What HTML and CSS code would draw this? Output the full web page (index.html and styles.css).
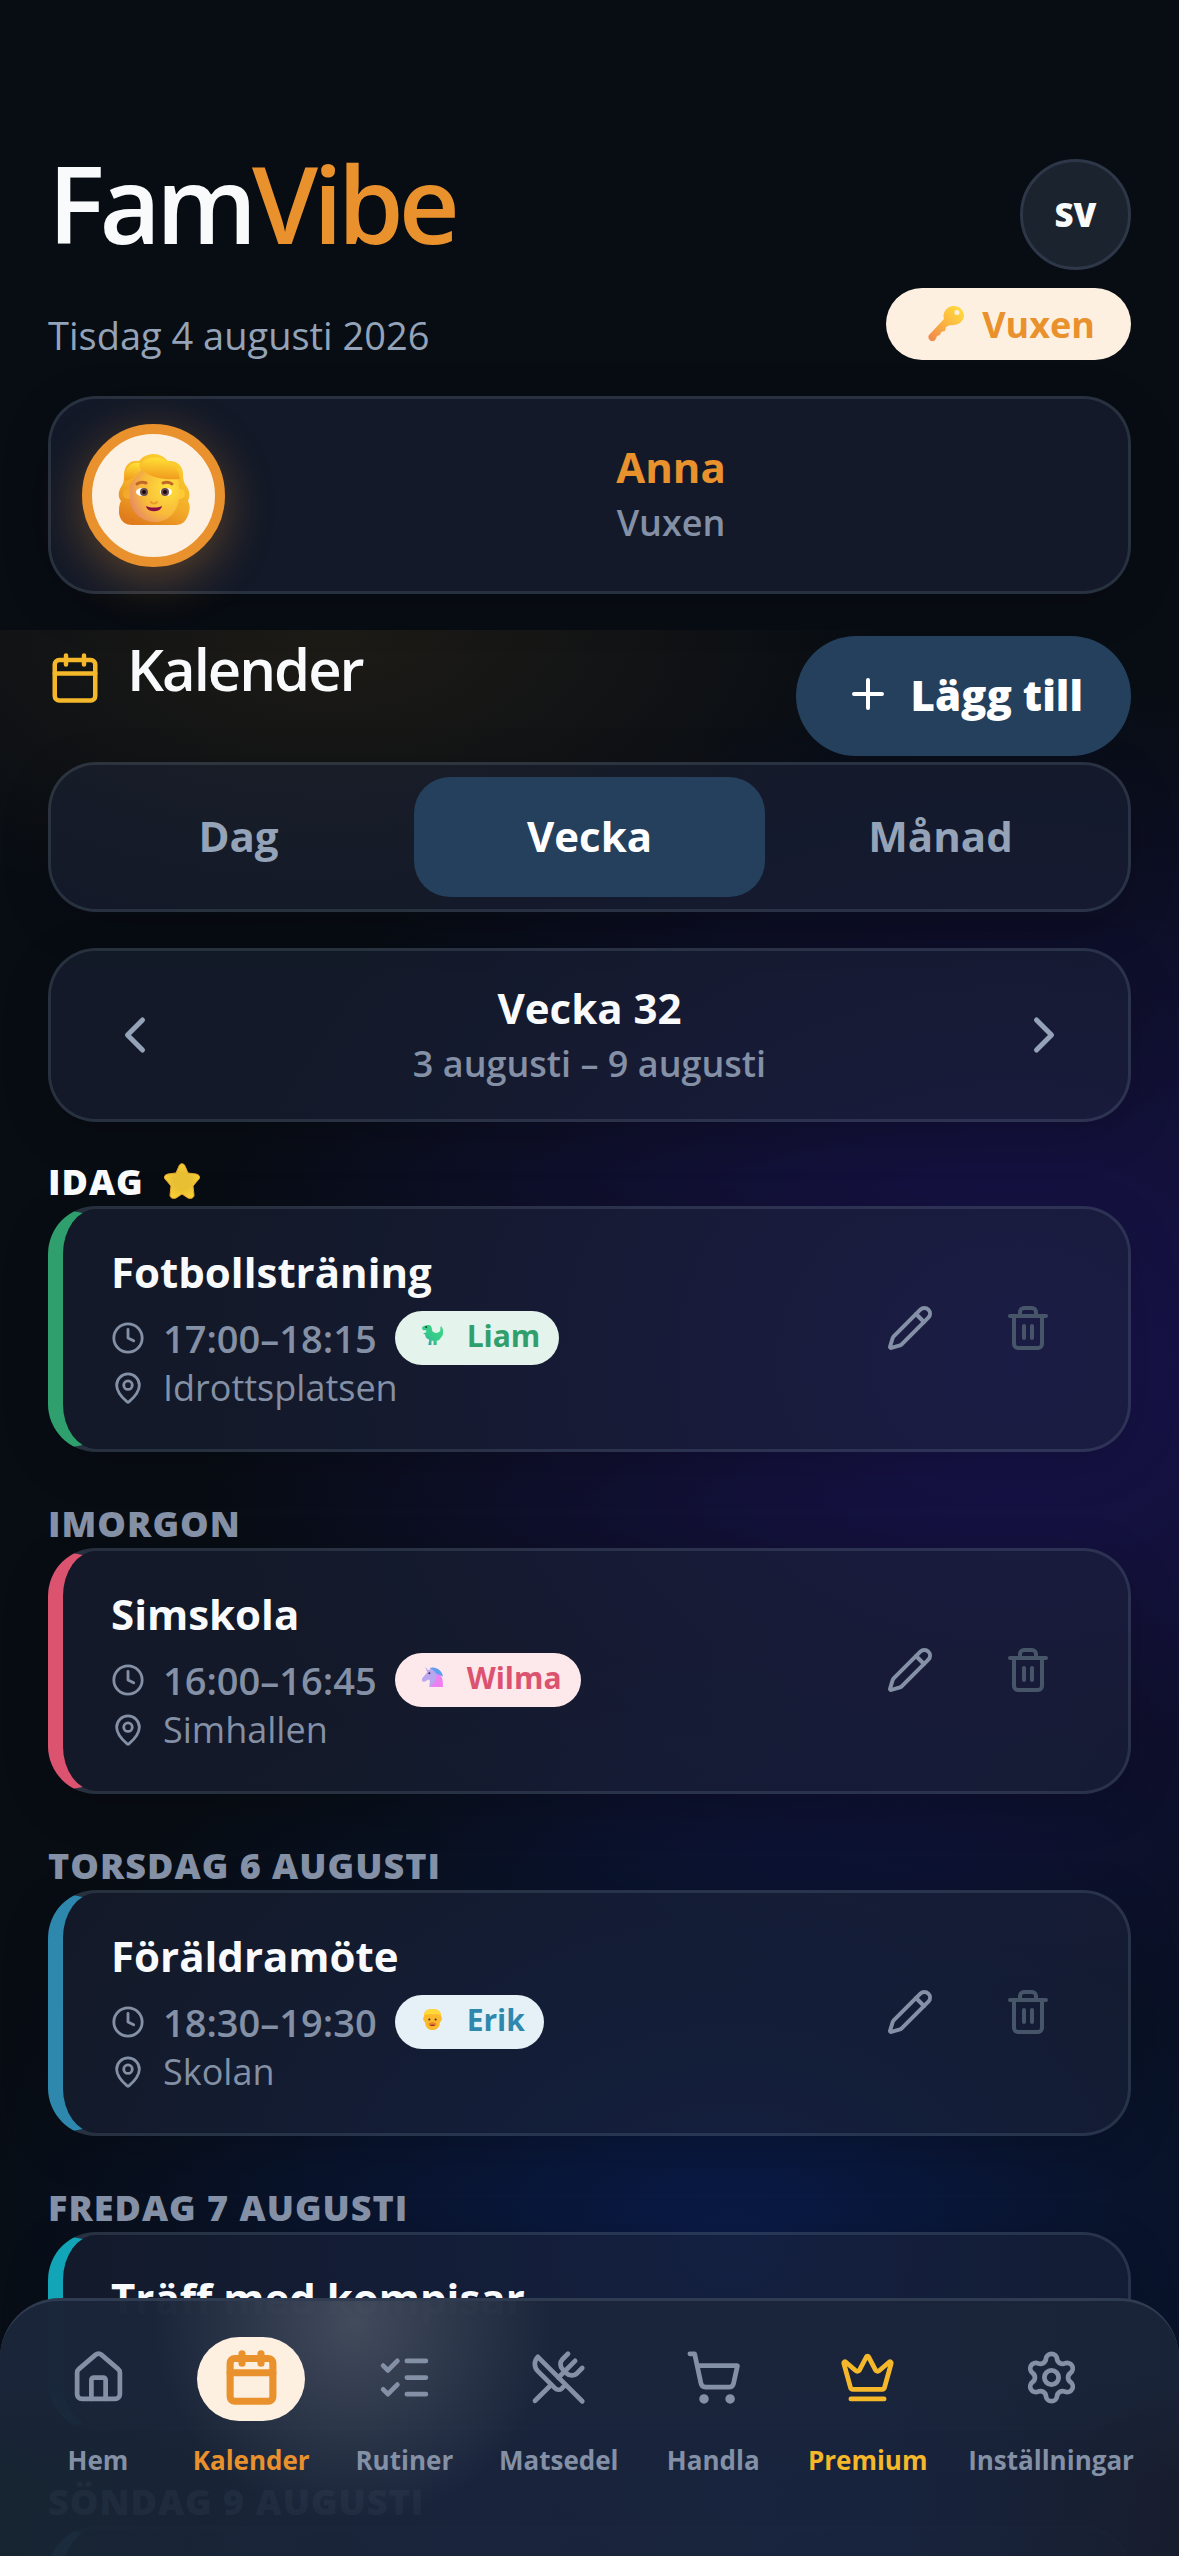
FILE: index.html
```html
<!DOCTYPE html>
<html lang="sv">
<head>
    <meta charset="UTF-8">
    <meta name="viewport" content="width=device-width, initial-scale=1.0">
    <title>FamVibe – Kalender</title>
    <link rel="stylesheet" href="styles.css">
</head>
<body>
<!-- Ikoner som används på flera ställen -->
<svg class="sprite" aria-hidden="true">
    <symbol id="i-calendar" viewBox="0 0 24 24"><path d="M8 2v4M16 2v4M3 10h18"/><rect x="3" y="4" width="18" height="18" rx="2"/></symbol>
    <symbol id="i-clock" viewBox="0 0 24 24"><circle cx="12" cy="12" r="10"/><path d="M12 6v6l4 2"/></symbol>
    <symbol id="i-pin" viewBox="0 0 24 24"><path d="M20 10c0 4.993-5.539 10.193-7.399 11.799a1 1 0 0 1-1.202 0C9.539 20.193 4 14.993 4 10a8 8 0 0 1 16 0"/><circle cx="12" cy="10" r="3"/></symbol>
    <symbol id="i-pencil" viewBox="0 0 24 24"><path d="M21.174 6.812a1 1 0 0 0-3.986-3.987L3.842 16.174a2 2 0 0 0-.5.83l-1.321 4.352a.5.5 0 0 0 .623.622l4.353-1.32a2 2 0 0 0 .83-.497z"/><path d="m15 5 4 4"/></symbol>
    <symbol id="i-trash" viewBox="0 0 24 24"><path d="M3 6h18M19 6v14a2 2 0 0 1-2 2H7a2 2 0 0 1-2-2V6M8 6V4a2 2 0 0 1 2-2h4a2 2 0 0 1 2 2v2M10 11v6M14 11v6"/></symbol>
</svg>

<div class="app">
    <header class="header">
        <div class="brand">
            <h1 class="logo">Fam<span class="logo-accent">Vibe</span></h1>
            <p class="date">Tisdag 4 augusti 2026</p>
        </div>
        <div class="header-right">
            <button class="lang-button">SV</button>
            <span class="role-pill">
                <svg class="key" viewBox="0 0 36 36">
                    <defs><linearGradient id="g-key" x1="1" y1="0" x2="0" y2="1"><stop offset="0.1" stop-color="#ffd93e"/><stop offset="0.5" stop-color="#fbb541"/><stop offset="1" stop-color="#f0844e"/></linearGradient></defs>
                    <path fill="url(#g-key)" fill-rule="evenodd" d="M26 0a10 10 0 0 0-10 13L1 29c-2 3 1 7 4 6 2 0 3-2 4-5l3-1 1-3 4-1 1-4 4-2c6 1 13-2 14-9C36 4 31 0 26 0Zm3 4a2 2 0 1 1 0 5 2 2 0 0 1 0-5Z"/>
                </svg>
                Vuxen
            </span>
        </div>
    </header>

    <section class="profile">
        <div class="avatar">
            <svg viewBox="0 0 72 72">
                <defs>
                    <linearGradient id="g-hair" x1="0.8" y1="0" x2="0.3" y2="1"><stop offset="0" stop-color="#fdd22f"/><stop offset="0.6" stop-color="#f3ab28"/><stop offset="1" stop-color="#e07c1c"/></linearGradient>
                    <radialGradient id="g-face" cx="0.75" cy="0.35" r="0.85"><stop offset="0" stop-color="#ffe23c"/><stop offset="0.6" stop-color="#f8b93a"/><stop offset="1" stop-color="#e5846a"/></radialGradient>
                    <linearGradient id="g-fringe" x1="0.6" y1="0" x2="0.5" y2="1"><stop offset="0" stop-color="#ffe135"/><stop offset="1" stop-color="#f1981e"/></linearGradient>
                </defs>
                <path fill="url(#g-hair)" d="M36 1c6 0 10 3 14 7 9-1 15 5 15 13 0 6 1 9 4 13 3 5 3 9 1 14 2 4 2 7 1 11-2 9-7 13-13 13H14C7 72 2 68 1 60c0-5 0-8 2-12-3-4-3-9 0-14 3-4 3-8 3-13C7 11 13 7 21 8c4-5 9-7 15-7Z"/>
                <circle cx="10" cy="41" r="5" fill="#f3a92c"/><circle cx="62" cy="41" r="5" fill="#fbca36"/>
                <path fill="url(#g-face)" d="M12 32c3-5 7-10 12-15 10 8 21 9 36 9 1 5 2 12 1 19-1 14-11 24-24 24S12 59 12 45V32Z"/>
                <path fill="url(#g-fringe)" d="M7 28C5 16 13 8 22 10c-1 3 0 5 1 7-4 5-9 9-16 11Z"/>
                <path fill="url(#g-fringe)" d="M22 14c2-9 15-12 25-7 8 4 14 9 15 19-14 1-31 0-40-12Z"/>
                <path fill="none" stroke="#c26728" stroke-width="3" stroke-linecap="round" d="M19 31c3-2 6-2 9-1M45 30c3-1 6-1 9 1"/>
                <ellipse cx="24" cy="39" rx="6" ry="4" fill="#fff"/><ellipse cx="48" cy="39" rx="6" ry="4" fill="#fff"/>
                <circle cx="26" cy="39" r="4" fill="#6b4a4a"/><circle cx="47" cy="39" r="4" fill="#6b4a4a"/>
                <circle cx="26" cy="39" r="2" fill="#140b12"/><circle cx="47" cy="39" r="2" fill="#140b12"/>
                <path fill="none" stroke="#e99a2a" stroke-width="2" stroke-linecap="round" d="M33 49c1 2 5 2 6 0"/>
                <path fill="#8a0f45" d="M28 53c5 2 11 2 16 0-1 7-15 7-16 0Z"/>
            </svg>
        </div>
        <div class="profile-text">
            <div class="profile-name">Anna</div>
            <div class="profile-role">Vuxen</div>
        </div>
    </section>

    <main class="main">
        <div class="page-head">
            <svg class="icon page-icon"><use href="#i-calendar"/></svg>
            <h2 class="page-title">Kalender</h2>
            <button class="add-button">
                <svg class="icon add-icon" viewBox="0 0 24 24"><path d="M5 12h14M12 5v14"/></svg>
                Lägg till
            </button>
        </div>

        <div class="tabs">
            <button class="tab">Dag</button>
            <button class="tab active">Vecka</button>
            <button class="tab">Månad</button>
        </div>

        <div class="week-nav">
            <button class="arrow" aria-label="Föregående vecka"><svg class="icon" viewBox="0 0 24 24"><path d="m15 18-6-6 6-6"/></svg></button>
            <div class="week-text">
                <div class="week-title">Vecka 32</div>
                <div class="week-range">3 augusti – 9 augusti</div>
            </div>
            <button class="arrow" aria-label="Nästa vecka"><svg class="icon" viewBox="0 0 24 24"><path d="m9 18 6-6-6-6"/></svg></button>
        </div>

        <section class="day">
            <h3 class="day-title today">IDAG
                <svg class="star" viewBox="0 0 36 36">
                    <defs><radialGradient id="g-star"><stop offset="0.5" stop-color="#e8bf33"/><stop offset="1" stop-color="#f9cf35"/></radialGradient></defs>
                    <path fill="url(#g-star)" stroke="#e5a52c" d="M15 3c1-3 5-3 6 0l3 7 8 1c4 1 5 4 2 6l-5 6 1 9c0 3-3 4-6 3l-6-4-6 4c-3 1-6 0-6-3l1-9-5-6c-3-2-2-5 2-6l8-1 3-7Z"/>
                </svg>
            </h3>
            <article class="event green">
                <div class="event-body">
                    <h4 class="event-title">Fotbollsträning</h4>
                    <div class="event-row">
                        <svg class="icon small"><use href="#i-clock"/></svg>
                        <span class="event-time">17:00–18:15</span>
                        <span class="person">
                            <svg class="emoji" viewBox="0 0 20 20">
                                <defs><linearGradient id="g-dino" x1="1" y1="0" x2="0" y2="1"><stop offset="0" stop-color="#3ddc84"/><stop offset="0.6" stop-color="#35c88b"/><stop offset="1" stop-color="#4a78b0"/></linearGradient></defs>
                                <path fill="url(#g-dino)" d="M0 3c0-2 4-3 7-3 3 1 2 4 3 6 2 2 5 2 7 0 1-2 0-3 1-5 3 3 3 8 0 11-1 2-2 3-4 3v4h-3v-4H9v4H6l1-5c-3-1-4-3-4-5L1 8l3-1V5L1 5Z"/>
                                <circle cx="4" cy="2" r="1" fill="#174b35"/>
                            </svg>
                            Liam
                        </span>
                    </div>
                    <div class="event-row">
                        <svg class="icon small"><use href="#i-pin"/></svg>
                        <span class="event-place">Idrottsplatsen</span>
                    </div>
                </div>
                <div class="event-actions">
                    <button class="action" aria-label="Redigera"><svg class="icon"><use href="#i-pencil"/></svg></button>
                    <button class="action delete" aria-label="Ta bort"><svg class="icon"><use href="#i-trash"/></svg></button>
                </div>
            </article>
        </section>

        <section class="day">
            <h3 class="day-title">IMORGON</h3>
            <article class="event red">
                <div class="event-body">
                    <h4 class="event-title">Simskola</h4>
                    <div class="event-row">
                        <svg class="icon small"><use href="#i-clock"/></svg>
                        <span class="event-time">16:00–16:45</span>
                        <span class="person">
                            <svg class="emoji" viewBox="0 0 20 20">
                                <path fill="#b9a6ee" d="M3 0l3 3 4-2 4 5c3 4 2 8 1 13H7c0-3 1-5 0-7-2 0-3 2-5 2s-3-2-2-3l5-6Z"/>
                                <path fill="#5f9df0" d="M7 1c6-2 12 2 13 8l-6-2-3-4Z"/>
                                <path fill="#ee7ff0" d="M14 7c5 0 6 4 6 12H8c3-3 6-6 6-12Z"/>
                                <circle cx="7" cy="6" r="1" fill="#3b2d63"/>
                            </svg>
                            Wilma
                        </span>
                    </div>
                    <div class="event-row">
                        <svg class="icon small"><use href="#i-pin"/></svg>
                        <span class="event-place">Simhallen</span>
                    </div>
                </div>
                <div class="event-actions">
                    <button class="action" aria-label="Redigera"><svg class="icon"><use href="#i-pencil"/></svg></button>
                    <button class="action delete" aria-label="Ta bort"><svg class="icon"><use href="#i-trash"/></svg></button>
                </div>
            </article>
        </section>

        <section class="day">
            <h3 class="day-title">TORSDAG 6 AUGUSTI</h3>
            <article class="event blue">
                <div class="event-body">
                    <h4 class="event-title">Föräldramöte</h4>
                    <div class="event-row">
                        <svg class="icon small"><use href="#i-clock"/></svg>
                        <span class="event-time">18:30–19:30</span>
                        <span class="person">
                            <svg class="emoji" viewBox="0 0 20 20">
                                <path fill="#fbb92b" d="M2 6c0-5 5-6 8-6s8 1 8 6l1 4-2 3c0 4-3 7-7 7s-7-3-7-7L1 10Z"/>
                                <path fill="#ffd93a" d="M2 6c0-5 5-6 8-6s8 1 8 6l-3-1H5Z"/>
                                <circle cx="7" cy="10" r="1" fill="#43272a"/><circle cx="13" cy="10" r="1" fill="#43272a"/>
                                <path fill="#e8862a" d="M6 14c2-2 6-2 8 0l-1 2H7Z"/><path fill="#7d1238" d="M8 15h4v1H8Z"/>
                            </svg>
                            Erik
                        </span>
                    </div>
                    <div class="event-row">
                        <svg class="icon small"><use href="#i-pin"/></svg>
                        <span class="event-place">Skolan</span>
                    </div>
                </div>
                <div class="event-actions">
                    <button class="action" aria-label="Redigera"><svg class="icon"><use href="#i-pencil"/></svg></button>
                    <button class="action delete" aria-label="Ta bort"><svg class="icon"><use href="#i-trash"/></svg></button>
                </div>
            </article>
        </section>

        <section class="day">
            <h3 class="day-title">FREDAG 7 AUGUSTI</h3>
            <article class="event teal compact">
                <div class="event-body">
                    <h4 class="event-title">Träff med kompisar</h4>
                </div>
            </article>
        </section>

        <section class="day">
            <h3 class="day-title">SÖNDAG 9 AUGUSTI</h3>
            <article class="event blue compact"></article>
        </section>
    </main>

    <nav class="bottom-nav">
        <a href="#" class="nav-item">
            <span class="nav-icon"><svg class="icon" viewBox="0 0 24 24"><path d="M15 21v-8a1 1 0 0 0-1-1h-4a1 1 0 0 0-1 1v8"/><path d="M3 10a2 2 0 0 1 .709-1.528l7-6a2 2 0 0 1 2.582 0l7 6A2 2 0 0 1 21 10v9a2 2 0 0 1-2 2H5a2 2 0 0 1-2-2z"/></svg></span>
            Hem
        </a>
        <a href="#" class="nav-item active">
            <span class="nav-icon"><svg class="icon"><use href="#i-calendar"/></svg></span>
            Kalender
        </a>
        <a href="#" class="nav-item">
            <span class="nav-icon"><svg class="icon" viewBox="0 0 24 24"><path d="m3 17 2 2 4-4M3 7l2 2 4-4M13 5h8M13 12h8M13 19h8"/></svg></span>
            Rutiner
        </a>
        <a href="#" class="nav-item">
            <span class="nav-icon"><svg class="icon" viewBox="0 0 24 24"><path d="m16 2-2.3 2.3a3 3 0 0 0 0 4.2l1.8 1.8a3 3 0 0 0 4.2 0L22 8"/><path d="M15 15 3.3 3.3a4.2 4.2 0 0 0 0 6l7.3 7.3c.7.7 2 .7 2.8 0L15 15Zm0 0 7 7"/><path d="m2.1 21.8 6.4-6.3M19 5l-7 7"/></svg></span>
            Matsedel
        </a>
        <a href="#" class="nav-item">
            <span class="nav-icon"><svg class="icon" viewBox="0 0 24 24"><circle cx="8" cy="21" r="1"/><circle cx="19" cy="21" r="1"/><path d="M2.05 2.05h2l2.66 12.42a2 2 0 0 0 2 1.58h9.78a2 2 0 0 0 1.95-1.57l1.65-7.43H5.12"/></svg></span>
            Handla
        </a>
        <a href="#" class="nav-item premium">
            <span class="nav-icon"><svg class="icon" viewBox="0 0 24 24"><path d="M11.562 3.266a.5.5 0 0 1 .876 0L15.39 8.87a1 1 0 0 0 1.516.294L21.183 5.5a.5.5 0 0 1 .798.519l-2.834 10.246a1 1 0 0 1-.956.734H5.81a1 1 0 0 1-.957-.734L2.02 6.02a.5.5 0 0 1 .798-.519l4.276 3.664a1 1 0 0 0 1.516-.294zM5 21h14"/></svg></span>
            Premium
        </a>
        <a href="#" class="nav-item">
            <span class="nav-icon"><svg class="icon" viewBox="0 0 24 24"><path d="M9.671 4.136a2.34 2.34 0 0 1 4.659 0 2.34 2.34 0 0 0 3.319 1.915 2.34 2.34 0 0 1 2.33 4.033 2.34 2.34 0 0 0 0 3.831 2.34 2.34 0 0 1-2.33 4.033 2.34 2.34 0 0 0-3.319 1.915 2.34 2.34 0 0 1-4.659 0 2.34 2.34 0 0 0-3.32-1.915 2.34 2.34 0 0 1-2.33-4.033 2.34 2.34 0 0 0 0-3.831A2.34 2.34 0 0 1 6.35 6.051a2.34 2.34 0 0 0 3.319-1.915"/><circle cx="12" cy="12" r="3"/></svg></span>
            Inställningar
        </a>
    </nav>
</div>
</body>
</html>
```

FILE: styles.css
```css
* {
    box-sizing: border-box;
}

body {
    margin: 0;
    background-color: #080d14;
    color: #f8fafc;
    font-family: "Open Sans", sans-serif;
    font-size: 36px;
}

h1, h2, h3, h4, p {
    margin: 0;
}

button {
    border: none;
    background: none;
    padding: 0;
    color: inherit;
    font-family: inherit;
    cursor: pointer;
}

.sprite {
    display: none;
}

.icon {
    width: 48px;
    height: 48px;
    flex: none;
    fill: none;
    stroke: currentColor;
    stroke-width: 2;
    stroke-linecap: round;
    stroke-linejoin: round;
}

.app {
    position: relative;
    height: 100vh;
    overflow: hidden;
    display: flex;
    flex-direction: column;
}

/* Sidhuvud */
.header {
    display: flex;
    justify-content: space-between;
    padding: 159px 48px 0;
}

.logo {
    font-size: 106px;
    line-height: 88px;
    font-weight: 600;
    letter-spacing: -5px;
}

.logo-accent {
    color: #e9912d;
}

.date {
    margin-top: 64px;
    font-size: 38px;
    line-height: 48px;
    color: #94a3b8;
}

.header-right {
    display: flex;
    flex-direction: column;
    align-items: flex-end;
    gap: 18px;
}

.lang-button {
    width: 111px;
    height: 111px;
    border: 3px solid #2d3748;
    border-radius: 50%;
    background-color: #1b232f;
    font-size: 33px;
    font-weight: 800;
}

.role-pill {
    display: flex;
    align-items: center;
    gap: 18px;
    height: 72px;
    padding: 0 36px 0 42px;
    border-radius: 36px;
    background-color: #fdf0e1;
    color: #e9912d;
    font-weight: 700;
}

.key, .star {
    width: 36px;
    height: 36px;
}

/* Kort */
.profile, .tabs, .week-nav, .event {
    border: 3px solid rgba(71, 85, 105, 0.5);
    border-radius: 48px;
    background-color: rgba(30, 38, 59, 0.5);
    background-clip: padding-box;
    box-shadow: 0 12px 48px rgba(0, 0, 0, 0.2);
}

.profile {
    display: flex;
    align-items: center;
    gap: 20px;
    height: 198px;
    margin: 36px 48px;
    padding: 0 31px;
    flex: none;
}

.avatar {
    display: flex;
    align-items: center;
    justify-content: center;
    width: 143px;
    height: 143px;
    border: 10px solid #e9912d;
    border-radius: 50%;
    background-color: #fdf0e1;
    box-shadow: 0 12px 48px rgba(233, 145, 45, 0.35);
}

.avatar svg {
    width: 72px;
    height: 72px;
    margin-bottom: 12px;
}

.profile-text {
    flex: 1;
    text-align: center;
}

.profile-name {
    font-size: 42px;
    line-height: 56px;
    font-weight: 700;
    color: #e9912d;
}

.profile-role {
    font-size: 36px;
    line-height: 56px;
    font-weight: 600;
    color: #8490a5;
}

/* Innehåll */
.main {
    flex: 1;
    min-height: 0;
    overflow: hidden;
    padding: 6px 48px 0;
    background:
        radial-gradient(ellipse 560px 300px at 28% 0, rgba(245, 170, 40, 0.09), transparent),
        radial-gradient(ellipse 820px 680px at 86% 38%, rgba(44, 26, 150, 0.45), transparent),
        radial-gradient(ellipse 760px 620px at 62% 84%, rgba(13, 50, 160, 0.36), transparent);
}

.page-head {
    display: flex;
    align-items: flex-start;
    margin-bottom: 6px;
}

.page-icon {
    width: 54px;
    height: 54px;
    margin: 15px 25px 0 0;
    color: #f5b82a;
}

.page-title {
    flex: 1;
    font-size: 58px;
    line-height: 66px;
    font-weight: 600;
    letter-spacing: -2px;
}

.add-button {
    display: flex;
    align-items: center;
    gap: 18px;
    height: 120px;
    padding: 0 48px 4px;
    border-radius: 60px;
    background-color: #24405c;
    color: #fff;
    font-size: 42px;
    font-weight: 800;
}

.tabs {
    display: flex;
    height: 150px;
    padding: 12px;
    margin-bottom: 36px;
}

.tab {
    flex: 1;
    padding-bottom: 4px;
    border-radius: 36px;
    font-size: 42px;
    font-weight: 700;
    color: #94a3b8;
}

.tab.active {
    background-color: #24405c;
    color: #fff;
}

.week-nav {
    display: flex;
    align-items: center;
    justify-content: space-between;
    height: 174px;
    padding: 0 54px;
    margin-bottom: 36px;
}

.arrow {
    display: flex;
    color: #94a3b8;
}

.arrow .icon {
    width: 60px;
    height: 60px;
}

.week-text {
    text-align: center;
}

.week-title {
    font-size: 42px;
    line-height: 58px;
    font-weight: 700;
}

.week-range {
    font-size: 36px;
    line-height: 54px;
    font-weight: 600;
    color: #8490a5;
}

.day {
    margin-bottom: 48px;
}

.day-title {
    display: flex;
    align-items: center;
    gap: 20px;
    height: 48px;
    padding-bottom: 2px;
    font-size: 36px;
    font-weight: 800;
    letter-spacing: 1px;
    color: #8490a5;
}

.day-title.today {
    color: #f8fafc;
}

.event {
    --member: #2fa06d;
    --member-soft: #e4f3eb;
    display: flex;
    align-items: center;
    height: 246px;
    padding: 0 76px 0 48px;
    border-left: 15px solid var(--member);
}

.event.red {
    --member: #dc5370;
    --member-soft: #fde8ec;
}

.event.blue {
    --member: #2e88ad;
    --member-soft: #e5f1f7;
}

.event.teal {
    --member: #12a5b8;
}

.event.compact {
    height: 198px;
    align-items: flex-start;
    padding-top: 35px;
}

.event-body {
    flex: 1;
    padding-bottom: 4px;
}

.event-title {
    margin-bottom: 11px;
    font-size: 42px;
    line-height: 56px;
    font-weight: 700;
}

.event-row {
    display: flex;
    align-items: center;
    gap: 18px;
    height: 54px;
    font-size: 36px;
    color: #8490a5;
}

.event-row + .event-row {
    height: 46px;
}

.icon.small {
    width: 34px;
    height: 34px;
}

.event-time {
    font-size: 38px;
    font-weight: 600;
}

.person {
    display: flex;
    align-items: center;
    gap: 24px;
    height: 54px;
    padding: 0 19px 4px 27px;
    border-radius: 27px;
    background-color: var(--member-soft);
    color: var(--member);
    font-size: 30px;
    font-weight: 700;
}

.emoji {
    width: 21px;
    height: 21px;
}

.event-actions {
    display: flex;
    gap: 70px;
    padding-bottom: 2px;
    color: #8490a5;
}

.action {
    display: flex;
}

.delete {
    color: #475569;
}

/* Bottenmeny */
.bottom-nav {
    position: absolute;
    left: 0;
    right: 0;
    bottom: 0;
    display: flex;
    justify-content: space-between;
    height: 258px;
    padding: 36px 45px 0 44px;
    border-top: 3px solid #2f3b50;
    border-radius: 60px 60px 0 0;
    background:
        radial-gradient(ellipse 200px 200px at 30% 8%, rgba(170, 175, 180, 0.28), transparent),
        linear-gradient(180deg, rgba(26, 37, 58, 0.8) 30%, transparent 70%),
        linear-gradient(90deg, rgba(24, 38, 52, 0.94), rgba(26, 36, 60, 0.94) 40%, rgba(24, 36, 62, 0.94) 75%, rgba(24, 30, 46, 0.94));
}

.nav-item {
    display: flex;
    flex-direction: column;
    align-items: center;
    gap: 21px;
    color: #8490a5;
    font-size: 26px;
    line-height: 36px;
    font-weight: 700;
    text-decoration: none;
}

.nav-icon {
    display: flex;
    align-items: center;
    justify-content: center;
    width: 108px;
    height: 84px;
    padding-bottom: 3px;
    border-radius: 42px;
}

.nav-icon .icon {
    width: 57px;
    height: 57px;
}

.nav-item.active {
    color: #e9912d;
}

.nav-item.active .nav-icon {
    background-color: #fdf0e1;
}

.nav-item.active .icon {
    stroke-width: 3;
}

.nav-item.premium {
    color: #f5b82a;
}
```
